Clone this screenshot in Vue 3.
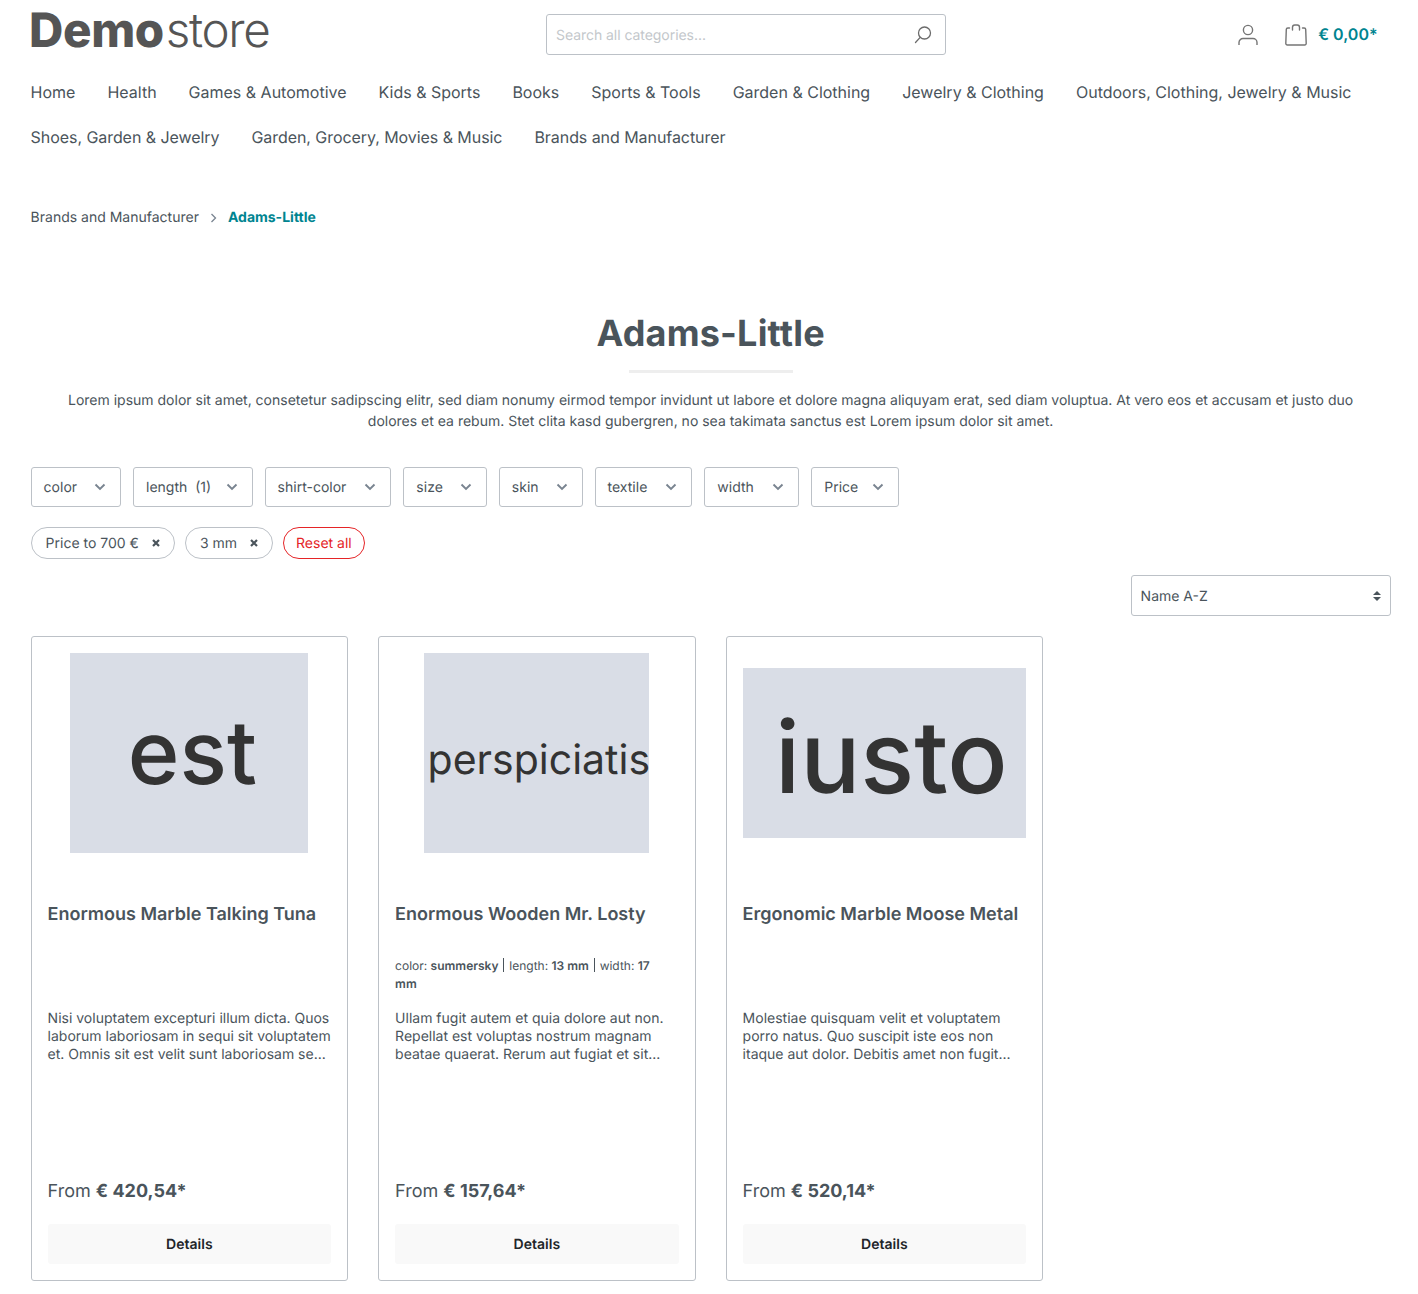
<template>
  <div class="page">
    <header class="top">
      <div class="logo"><b>Demo</b><span>store</span></div>
      <div class="search">
        <span class="search-ph">Search all categories...</span>
        <svg width="20" height="20" viewBox="0 0 20 20" fill="none" stroke-width="1.3">
          <circle cx="11.5" cy="8" r="6" stroke="#6b6b6b" />
          <path d="M7.2 12.4 2.5 17.5" stroke="#6b6b6b" stroke-linecap="round" />
        </svg>
      </div>
      <div class="actions">
        <svg class="user" width="20" height="22" viewBox="0 0 20 22" fill="none" stroke="#757575" stroke-width="1.4">
          <circle cx="10" cy="6" r="4.6" />
          <path d="M1 21v-2.500a4 4 0 0 1 4-4h10a4 4 0 0 1 4 4V21" />
        </svg>
        <svg class="bag" width="22" height="22" viewBox="0 0 22 22" fill="none" stroke="#757575" stroke-width="1.4" stroke-linecap="round">
          <path d="M4.500 4H2.800a1.500 1.500 0 0 0-1.500 1.400L.8 19.500A1.500 1.500 0 0 0 2.300 21h17.400a1.500 1.500 0 0 0 1.500-1.500l-.5-14.100A1.500 1.500 0 0 0 19.200 4h-1.700" />
          <path d="M7.500 6V3.200A2.200 2.200 0 0 1 9.700 1h2.600a2.200 2.200 0 0 1 2.200 2.200V6" />
        </svg>
        <span class="cart-total">€ 0,00*</span>
      </div>
    </header>

    <nav class="nav">
      <a v-for="item in navItems" :key="item">{{ item }}</a>
    </nav>

    <div class="crumbs">
      <span>Brands and Manufacturer</span>
      <svg width="7" height="10" viewBox="0 0 7 10" fill="none" stroke="#798490" stroke-width="1.300">
        <path d="m1.500 1 4 4-4 4" />
      </svg>
      <strong>Adams-Little</strong>
    </div>

    <section class="intro">
      <h1>Adams-Little</h1>
      <div class="rule"></div>
      <p>Lorem ipsum dolor sit amet, consetetur sadipscing elitr, sed diam nonumy eirmod tempor invidunt ut labore et dolore magna aliquyam erat, sed diam voluptua. At vero eos et accusam et justo duo dolores et ea rebum. Stet clita kasd gubergren, no sea takimata sanctus est Lorem ipsum dolor sit amet.</p>
    </section>

    <div class="filters">
      <button v-for="f in filters" :key="f" class="filter">
        <span>{{ f }}</span>
        <svg width="12" height="8" viewBox="0 0 12 8" fill="none" stroke="#798490" stroke-width="1.900">
          <path d="m1.500 1.500 4.500 4.500 4.500-4.500" />
        </svg>
      </button>
    </div>

    <div class="chips">
      <span v-for="c in chips" :key="c" class="chip">
        {{ c }}
        <svg width="10" height="10" viewBox="0 0 10 10" fill="none" stroke="#4a545b" stroke-width="2.200">
          <path d="m2 2 6 6m0-6-6 6" />
        </svg>
      </span>
      <span class="chip reset">Reset all</span>
    </div>

    <div class="sort-row">
      <div class="sort">
        <span class="sort-label">Name A-Z</span>
        <svg width="8" height="10" viewBox="0 0 8 10" fill="#4a545b">
          <path d="M4 0 8 4H0zM4 10 0 6h8z" />
        </svg>
      </div>
    </div>

    <div class="grid">
      <article v-for="p in products" :key="p.name" class="card">
        <div class="thumb-wrap">
          <div class="thumb" :class="p.thumbClass">{{ p.thumb }}</div>
        </div>
        <h2>{{ p.name }}</h2>
        <div class="props">
          <template v-if="p.props">
            color: <b>summersky</b> <i></i> length: <b>13 mm</b> <i></i> width: <b>17 mm</b>
          </template>
        </div>
        <p class="desc">{{ p.desc }}</p>
        <div class="price">From <b>{{ p.price }}</b></div>
        <button class="details">Details</button>
      </article>
    </div>
  </div>
</template>

<script setup>
const navItems = [
  'Home', 'Health', 'Games & Automotive', 'Kids & Sports', 'Books', 'Sports & Tools',
  'Garden & Clothing', 'Jewelry & Clothing', 'Outdoors, Clothing, Jewelry & Music',
  'Shoes, Garden & Jewelry', 'Garden, Grocery, Movies & Music', 'Brands and Manufacturer',
]
const filters = ['color', 'length  (1)', 'shirt-color', 'size', 'skin', 'textile', 'width', 'Price']
const chips = ['Price to 700 €', '3 mm']
const products = [
  {
    name: 'Enormous Marble Talking Tuna',
    thumb: 'est',
    thumbClass: 't1',
    desc: 'Nisi voluptatem excepturi illum dicta. Quos laborum laboriosam in sequi sit voluptatem et. Omnis sit est velit sunt laboriosam se...',
    price: '€ 420,54*',
  },
  {
    name: 'Enormous Wooden Mr. Losty',
    thumb: 'perspiciatis',
    thumbClass: 't2',
    props: true,
    desc: 'Ullam fugit autem et quia dolore aut non. Repellat est voluptas nostrum magnam beatae quaerat. Rerum aut fugiat et sit...',
    price: '€ 157,64*',
  },
  {
    name: 'Ergonomic Marble Moose Metal',
    thumb: 'iusto',
    thumbClass: 't3',
    desc: 'Molestiae quisquam velit et voluptatem porro natus. Quo suscipit iste eos non itaque aut dolor. Debitis amet non fugit...',
    price: '€ 520,14*',
  },
]
</script>

<style>
html, body { background: #fff; }
</style>

<style scoped>
.page {
  width: 1360px;
  height: 1294px;
  overflow: hidden;
  margin-left: 30.6px;
  font-family: Inter, "Liberation Sans", sans-serif;
  font-size: 14px;
  color: #4a545b;
  text-rendering: geometricPrecision;
}
.top {
  display: flex;
  align-items: center;
  height: 70px;
  position: relative;
}
.logo {
  width: 515.4px;
  font-size: 47.5px;
  line-height: 48px;
  margin-top: -8px;
  margin-left: -1.5px;
  margin-right: 1.5px;
  color: #555;
  white-space: nowrap;
}
.logo b { font-weight: 800; letter-spacing: -0.4px; }
.logo span { font-weight: 300; letter-spacing: -1.3px; margin-left: 2px; }
.search {
  width: 400px;
  height: 41px;
  margin-top: -1px;
  box-sizing: border-box;
  border: 1px solid #bcc1c7;
  border-radius: 3px;
  padding: 0 12px 0 9px;
  display: flex;
  align-items: center;
  justify-content: space-between;
}
.search-ph { color: #c3c7cb; padding-top: 1px; letter-spacing: -0.05px; }
.actions {
  margin-left: auto;
  margin-right: 13px;
  display: flex;
  align-items: center;
  height: 41px;
}
.user { margin-right: 27px; margin-top: -1px; }
.bag { margin-right: 11px; margin-top: -1px; }
.cart-total {
  color: #008490;
  font-weight: 600;
  font-size: 16px;
  margin-top: -2px;
}
.nav {
  display: flex;
  flex-wrap: wrap;
  column-gap: 32px;
  font-size: 16px;
  line-height: 45px;
}
.nav a:nth-child(n + 10) { letter-spacing: -0.06px; }
.crumbs {
  display: flex;
  align-items: center;
  gap: 11px;
  margin-top: 47px;
  height: 21px;
  line-height: 21px;
}
.crumbs strong { color: #008490; font-weight: 700; }
.intro {
  text-align: center;
  margin-top: 83px;
}
h1 {
  margin: 0;
  font-size: 36px;
  line-height: 44px;
  font-weight: 700;
  letter-spacing: 0.2px;
}
.rule {
  width: 164px;
  height: 3px;
  background: #eee;
  margin: 15px auto 0;
}
.intro p {
  margin: 17px auto 0;
  line-height: 21px;
  width: 1310px;
}
.filters {
  display: flex;
  gap: 12px;
  margin-top: 35px;
}
.filter {
  height: 40px;
  box-sizing: border-box;
  padding: 0 14px 0 12px;
  background: #fff;
  border: 1px solid #bcc1c7;
  border-radius: 3px;
  display: flex;
  align-items: center;
  gap: 17px;
  font: inherit;
  color: inherit;
  white-space: pre;
  text-rendering: geometricPrecision;
}
.filter:nth-child(2) { gap: 14.500px; }
.filter:nth-child(3) { gap: 18px; }
.filter:nth-child(6) { gap: 18px; }
.filter:nth-child(7) { gap: 18.500px; }
.filter:nth-child(8) { gap: 14px; }
.chips {
  display: flex;
  gap: 10px;
  margin-top: 20px;
}
.chip {
  height: 32px;
  box-sizing: border-box;
  border: 1px solid #bcc1c7;
  border-radius: 16px;
  padding: 0 13px 0 14px;
  display: flex;
  align-items: center;
  gap: 12px;
}
.chip.reset {
  border-color: #e52427;
  color: #e52427;
  padding: 0 12px;
}
.sort-row {
  display: flex;
  justify-content: flex-end;
  margin-top: 16px;
}
.sort {
  width: 260px;
  height: 41px;
  box-sizing: border-box;
  border: 1px solid #bcc1c7;
  border-radius: 3px;
  padding: 0 9px;
  display: flex;
  align-items: center;
  justify-content: space-between;
}
.sort-label { padding-top: 1px; }
.grid {
  display: grid;
  grid-template-columns: repeat(4, 1fr);
  gap: 30px;
  margin-top: 20px;
}
.card {
  height: 645px;
  box-sizing: border-box;
  border: 1px solid #bcc1c7;
  border-radius: 3px;
  padding: 16px;
  display: flex;
  flex-direction: column;
}
.thumb-wrap {
  height: 200px;
  display: flex;
  align-items: center;
  justify-content: center;
  flex: none;
}
.thumb {
  background: #d9dde6;
  color: #333;
  display: flex;
  align-items: center;
  justify-content: center;
  white-space: nowrap;
  font-weight: 450;
  box-sizing: border-box;
}
.t1 { width: 238px; height: 200px; font-size: 88px; padding: 0 0 0 6px; }
.t2 { width: 225px; height: 200px; font-size: 41px; padding: 12px 0 0 4px; font-weight: 400; }
.t3 { width: 283px; height: 170px; font-size: 100px; padding: 8px 0 0 14px; }
h2 {
  margin: 50px 0 0;
  font-size: 18px;
  line-height: 24px;
  font-weight: 600;
  white-space: nowrap;
}
.props {
  margin-top: 30px;
  height: 36px;
  max-width: 272px;
  font-size: 12px;
  line-height: 18px;
}
.props b { font-weight: 600; }
.props i {
  display: inline-block;
  width: 1px;
  height: 14px;
  margin: 0 1.500px;
  vertical-align: -2px;
  background: #4a545b;
}
.desc {
  margin: 17px 0 0;
  line-height: 18px;
}
.price {
  margin-top: auto;
  font-size: 18px;
  line-height: 24px;
}
.price b { font-weight: 700; }
.details {
  margin-top: 20px;
  height: 40px;
  border: 0;
  border-radius: 3px;
  background: #f9f9f9;
  color: #212529;
  font: 600 14px Inter, "Liberation Sans", sans-serif;
  text-rendering: geometricPrecision;
}
</style>
